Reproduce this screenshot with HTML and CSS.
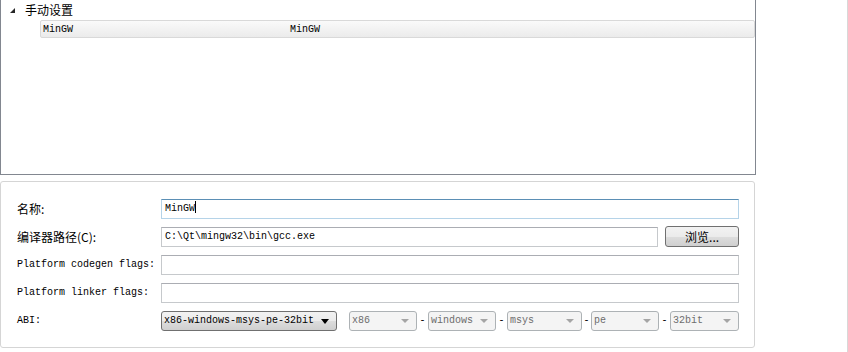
FILE: index.html
```html
<!DOCTYPE html>
<html lang="zh-CN">
<head>
    <meta charset="UTF-8">
    <title>编译器设置</title>
    <link rel="stylesheet" href="styles.css">
</head>
<body>
    <div class="page">
        <div class="tree">
            <div class="tree-group">
                <span class="expander"></span>
                <span class="cjk">手动设置</span>
            </div>
            <div class="tree-row">
                <span class="col-name">MinGW</span>
                <span class="col-type">MinGW</span>
            </div>
        </div>

        <div class="details">
            <div class="form">
                <label class="cjk">名称:</label>
                <div class="input focused">MinGW<span class="caret"></span></div>

                <label class="cjk">编译器路径(C):</label>
                <div class="path-row">
                    <div class="input">C:\Qt\mingw32\bin\gcc.exe</div>
                    <button class="btn cjk">浏览...</button>
                </div>

                <label>Platform codegen flags:</label>
                <div class="input"></div>

                <label>Platform linker flags:</label>
                <div class="input"></div>

                <label>ABI:</label>
                <div class="abi-row">
                    <div class="combo main-combo">x86-windows-msys-pe-32bit<span class="arrow"></span></div>
                    <div class="combo off w-arch">x86<span class="arrow"></span></div>
                    <span class="dash">-</span>
                    <div class="combo off w-os">windows<span class="arrow"></span></div>
                    <span class="dash">-</span>
                    <div class="combo off w-flavor">msys<span class="arrow"></span></div>
                    <span class="dash narrow">-</span>
                    <div class="combo off w-format">pe<span class="arrow"></span></div>
                    <span class="dash">-</span>
                    <div class="combo off w-width">32bit<span class="arrow"></span></div>
                </div>
            </div>
        </div>
    </div>
</body>
</html>
```

FILE: styles.css
```css
body {
    margin: 0;
    background-color: #ffffff;
    font-family: "Liberation Mono", "Noto Sans CJK SC", monospace;
    font-size: 10px;
    color: #000000;
}
.page {
    width: 847px;
    height: 352px;
    border-right: 1px solid #d8d8d8;
    overflow: hidden;
}
.cjk {
    font-family: "Noto Sans CJK SC", sans-serif;
    font-size: 12px;
}
.tree {
    width: 754px;
    height: 175px;
    border: 1px solid #828790;
    border-top: none;
    box-sizing: content-box;
}
.tree-group {
    display: flex;
    align-items: center;
    height: 21px;
    padding-left: 9px;
    margin-top: -1px;
}
.expander {
    width: 0;
    height: 0;
    border-left: 5px solid transparent;
    border-bottom: 5px solid #262626;
    margin-right: 10px;
    margin-top: 2px;
}
.tree-row {
    display: flex;
    align-items: center;
    height: 16px;
    margin-left: 39px;
    border: 1px solid #d9d9d9;
    border-radius: 2px;
    background: linear-gradient(#fafafa, #ebebeb);
    padding-left: 2px;
}
.col-name {
    width: 247px;
}
.details {
    width: 755px;
    height: 167px;
    margin-top: 6px;
    border: 1px solid #d5d5d5;
    border-radius: 3px;
    box-sizing: border-box;
    padding: 16px 0 0 16px;
}
.form {
    display: grid;
    grid-template-columns: 144px 578px;
    row-gap: 7px;
    align-items: center;
}
.form label {
    line-height: 20px;
    padding-top: 1px;
}
.input {
    height: 20px;
    box-sizing: border-box;
    border: 1px solid #c6c9cc;
    border-top-color: #abadb3;
    background-color: #ffffff;
    padding: 0 3px;
    line-height: 18px;
    white-space: pre;
}
.input.focused {
    border-color: #b5d3e8;
    border-top-color: #5b8fb5;
}
.caret {
    display: inline-block;
    width: 1px;
    height: 12px;
    background-color: #000000;
    vertical-align: -2px;
}
.path-row {
    display: flex;
    gap: 7px;
}
.path-row .input {
    width: 498px;
}
.btn {
    width: 74px;
    height: 21px;
    border: 1px solid #707070;
    border-radius: 3px;
    background: linear-gradient(#f2f2f2 0%, #ebebeb 50%, #dddddd 51%, #cfcfcf 100%);
    color: #000000;
    padding: 0;
    line-height: 17px;
    margin-top: -1px;
}
.abi-row {
    display: flex;
    align-items: center;
}
.combo {
    position: relative;
    height: 20px;
    box-sizing: border-box;
    border: 1px solid #707070;
    border-radius: 3px;
    background: linear-gradient(#f2f2f2 0%, #ebebeb 50%, #dddddd 51%, #cfcfcf 100%);
    padding-left: 2px;
    line-height: 18px;
}
.main-combo {
    width: 176px;
    margin-right: 12px;
}
.arrow {
    position: absolute;
    right: 7px;
    top: 7px;
    width: 0;
    height: 0;
    border-left: 4px solid transparent;
    border-right: 4px solid transparent;
    border-top: 5px solid #000000;
}
.combo.off {
    border-color: #adb2b5;
    background: #f4f4f4;
    color: #6d6d6d;
}
.combo.off .arrow {
    border-left-width: 4px;
    border-right-width: 4px;
    border-top: 4px solid #a5a5a5;
    top: 7px;
}
.dash {
    width: 11px;
    text-align: center;
}
.dash.narrow {
    width: 9px;
}
.w-arch { width: 68px; }
.w-os { width: 68px; }
.w-flavor { width: 75px; }
.w-format { width: 68px; }
.w-width { width: 69px; }
```
